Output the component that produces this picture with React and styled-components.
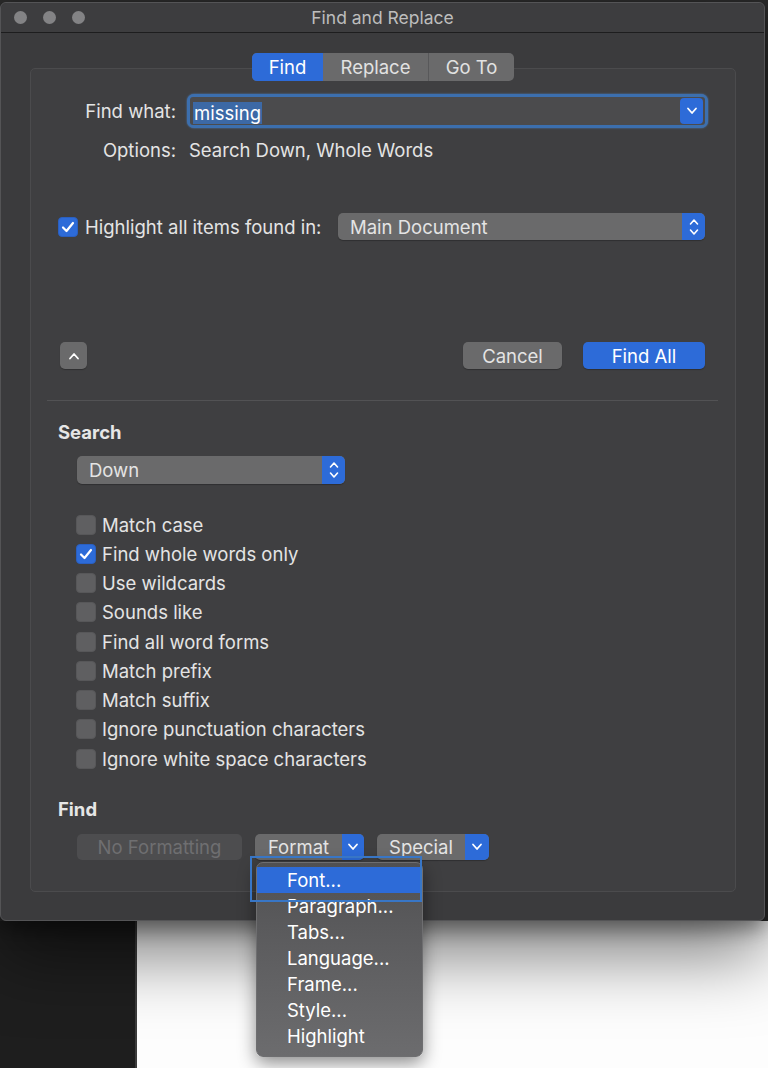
import React from 'react';
import styled, { createGlobalStyle } from 'styled-components';

const GlobalStyle = createGlobalStyle`
  html, body {
    margin: 0;
    padding: 0;
    background: #262626;
  }
  body {
    font-family: Inter, "Noto Sans", "Liberation Sans", sans-serif;
    -webkit-font-smoothing: antialiased;
  }
`;

const BLUE = '#2d6bd8';
const GRAY = '#6a6a6b';
const TEXT = '#e4e4e4';
const FS = '18.5px';

const Screen = styled.div`
  width: 768px;
  height: 1068px;
  overflow: hidden;
  box-sizing: border-box;
  padding-top: 2px;
  display: flex;
  flex-direction: column;
  background: #2b2b2b;
`;

const Window = styled.div`
  position: relative;
  z-index: 2;
  width: 765px;
  height: 919px;
  flex: 0 0 auto;
  box-sizing: border-box;
  display: flex;
  flex-direction: column;
  background: #3b3b3d;
  border: 1px solid #545456;
  border-radius: 6px;
  box-shadow: 0 34px 70px rgba(0, 0, 0, 0.5), 0 8px 20px rgba(0, 0, 0, 0.4);
`;

const TitleBar = styled.div`
  height: 29px;
  flex: 0 0 auto;
  display: grid;
  grid-template-columns: 1fr auto 1fr;
  align-items: center;
  border-bottom: 1px solid #1d1d1e;
  background: #3d3d3f;
  border-radius: 6px 6px 0 0;
`;

const Lights = styled.div`
  display: flex;
  gap: 16px;
  padding-left: 13px;
`;

const Light = styled.span`
  width: 13px;
  height: 13px;
  border-radius: 50%;
  background: #838385;
`;

const Title = styled.div`
  color: #bdbdbd;
  font-size: 17.5px;
`;

const Body = styled.div`
  flex: 1;
  display: flex;
  flex-direction: column;
  padding: 20px 28px 28px 29px;
`;

const Tabs = styled.div`
  position: relative;
  z-index: 1;
  align-self: center;
  display: flex;
  height: 28px;
  border-radius: 5px;
  overflow: hidden;
  background: ${GRAY};
`;

const Tab = styled.div`
  display: flex;
  align-items: center;
  justify-content: center;
  width: ${(p) => p.$w}px;
  font-size: ${FS};
  color: ${(p) => (p.$active ? '#ffffff' : '#e2e2e2')};
  background: ${(p) => (p.$active ? BLUE : 'transparent')};
  border-left: ${(p) => (p.$sep ? '1px solid #58585a' : 'none')};
`;

const GroupBox = styled.div`
  flex: 1;
  margin-top: -13px;
  display: flex;
  flex-direction: column;
  background: #3f3f41;
  border: 1px solid #4b4b4d;
  border-radius: 5px;
`;

const Section = styled.div`
  display: flex;
  flex-direction: column;
  padding: ${(p) => p.$pad};
`;

const Row = styled.div`
  display: flex;
  align-items: center;
  margin-top: ${(p) => p.$mt || 0}px;
  height: ${(p) => p.$h}px;
`;

const FormLabel = styled.div`
  width: 118px;
  margin-right: ${(p) => p.$gap}px;
  text-align: right;
  font-size: ${FS};
  color: ${TEXT};
  white-space: nowrap;
`;

const Text = styled.span`
  font-size: ${FS};
  color: ${TEXT};
  white-space: nowrap;
`;

const FocusField = styled.div`
  width: 521px;
  height: 34px;
  box-sizing: border-box;
  display: flex;
  align-items: center;
  padding: 3px;
  border-radius: 7px;
  background: #3c6fae;
  box-shadow: 0 0 2px #4d82c4;
`;

const FieldInner = styled.div`
  flex: 1;
  height: 100%;
  display: flex;
  align-items: center;
  justify-content: space-between;
  padding: 0 2px 0 3px;
  background: #4b4b4d;
  border-radius: 3px;
`;

const Selected = styled.span`
  display: inline-block;
  margin-top: 4px;
  padding: 0 1px;
  line-height: 22px;
  font-size: ${FS};
  color: #ffffff;
  background: #3c69a6;
`;

const ArrowBox = styled.div`
  width: ${(p) => p.$w || 23}px;
  height: ${(p) => p.$h || 26}px;
  display: flex;
  align-items: center;
  justify-content: center;
  background: ${BLUE};
  border-radius: ${(p) => p.$r || '4px'};
`;

const Check = styled.div`
  width: 20px;
  height: 20px;
  flex: 0 0 auto;
  box-sizing: border-box;
  display: flex;
  align-items: center;
  justify-content: center;
  border-radius: 4px;
  background: ${(p) => (p.$on ? BLUE : '#5f5f61')};
  border: 1px solid ${(p) => (p.$on ? '#2a5fc0' : '#575759')};
  margin-right: ${(p) => p.$gap}px;
`;

const Select = styled.div`
  width: ${(p) => p.$w}px;
  height: ${(p) => p.$h}px;
  margin-left: ${(p) => p.$ml || 0};
  display: flex;
  align-items: center;
  justify-content: space-between;
  box-sizing: border-box;
  padding-left: 12px;
  background: ${GRAY};
  border-radius: 5px;
  overflow: hidden;
  box-shadow: 0 1px 1px rgba(0, 0, 0, 0.25);
`;

const Button = styled.div`
  width: ${(p) => p.$w}px;
  height: 27px;
  display: flex;
  align-items: center;
  justify-content: center;
  font-size: ${FS};
  color: ${(p) => (p.$primary ? '#ffffff' : '#e4e4e4')};
  background: ${(p) => (p.$primary ? BLUE : GRAY)};
  border-radius: 5px;
  box-shadow: 0 1px 1px rgba(0, 0, 0, 0.25);
`;

const Spacer = styled.div`
  flex: 1;
`;

const Divider = styled.div`
  height: 1px;
  margin: 31px 17px 0 16px;
  background: #525254;
`;

const Heading = styled.div`
  font-size: ${FS};
  font-weight: 700;
  line-height: 22px;
  color: #e6e6e6;
  margin-top: ${(p) => p.$mt}px;
`;

const OptionList = styled.div`
  display: flex;
  flex-direction: column;
  margin: 26px 0 0 18px;
`;

const OptionRow = styled.div`
  height: 29.25px;
  display: flex;
  align-items: center;
`;

const ToolRow = styled.div`
  display: flex;
  align-items: center;
  gap: 13px;
  height: 26px;
  margin: 14px 0 0 19px;
`;

const DisabledButton = styled.div`
  width: 165px;
  height: 26px;
  display: flex;
  align-items: center;
  justify-content: center;
  font-size: ${FS};
  color: #6f6f71;
  background: #4d4d4f;
  border-radius: 5px;
`;

const PopButton = styled.div`
  position: relative;
  display: flex;
  height: 26px;
  border-radius: 5px;
  background: ${GRAY};
  box-shadow: 0 1px 1px rgba(0, 0, 0, 0.25);
`;

const PopLabel = styled.div`
  width: ${(p) => p.$w}px;
  display: flex;
  align-items: center;
  justify-content: center;
  font-size: ${FS};
  color: #e4e4e4;
`;

const Menu = styled.div`
  position: absolute;
  left: 1px;
  top: 28px;
  z-index: 5;
  width: 167px;
  height: 195px;
  box-sizing: border-box;
  padding-top: 4px;
  border-radius: 7px;
  border: 1px solid #6e6e70;
  background: linear-gradient(#505052, #5c5c5e 40%, #6c6c6e);
  box-shadow: 0 6px 18px rgba(0, 0, 0, 0.45);
`;

const MenuItem = styled.div`
  height: 26px;
  display: flex;
  align-items: center;
  padding-left: 30px;
  font-size: ${FS};
  color: #ffffff;
  background: ${(p) => (p.$active ? BLUE : 'transparent')};
`;

const FocusRect = styled.div`
  position: absolute;
  left: -5px;
  top: 22px;
  z-index: 6;
  width: 172px;
  height: 46px;
  box-sizing: border-box;
  border: 2px solid #3876c6;
  pointer-events: none;
`;

const Desktop = styled.div`
  flex: 1;
  display: flex;
`;

const DarkSide = styled.div`
  width: 135px;
  background: #1e1e1e;
  border-right: 2px solid #3c3c3c;
`;

const Paper = styled.div`
  flex: 1;
  background: #fdfdfd;
`;

const Chevron = ({ up }) => (
  <svg width="12" height="8" viewBox="0 0 12 8">
    <polyline
      points={up ? '2,6.5 6,2 10,6.5' : '2,1.5 6,6 10,1.5'}
      fill="none"
      stroke="#ffffff"
      strokeWidth="1.8"
      strokeLinecap="round"
      strokeLinejoin="round"
    />
  </svg>
);

const Stepper = () => (
  <svg width="12" height="20" viewBox="0 0 12 20">
    <polyline points="2.5,7 6,3 9.5,7" fill="none" stroke="#fff" strokeWidth="1.6" strokeLinecap="round" strokeLinejoin="round" />
    <polyline points="2.5,13 6,17 9.5,13" fill="none" stroke="#fff" strokeWidth="1.6" strokeLinecap="round" strokeLinejoin="round" />
  </svg>
);

const Tick = () => (
  <svg width="14" height="12" viewBox="0 0 14 12">
    <polyline points="2,6.5 5.5,10 12,2" fill="none" stroke="#fff" strokeWidth="2.2" strokeLinecap="round" strokeLinejoin="round" />
  </svg>
);

const options = [
  ['Match case', false],
  ['Find whole words only', true],
  ['Use wildcards', false],
  ['Sounds like', false],
  ['Find all word forms', false],
  ['Match prefix', false],
  ['Match suffix', false],
  ['Ignore punctuation characters', false],
  ['Ignore white space characters', false],
];

const menuItems = ['Font...', 'Paragraph...', 'Tabs...', 'Language...', 'Frame...', 'Style...', 'Highlight'];

export default function App() {
  return (
    <Screen>
      <GlobalStyle />
      <Window>
        <TitleBar>
          <Lights>
            <Light />
            <Light />
            <Light />
          </Lights>
          <Title>Find and Replace</Title>
          <div />
        </TitleBar>
        <Body>
          <Tabs>
            <Tab $w={71} $active>Find</Tab>
            <Tab $w={105}>Replace</Tab>
            <Tab $w={85} $sep>Go To</Tab>
          </Tabs>
          <GroupBox>
            <Section $pad="25px 27px 0 27px">
              <Row $h={34}>
                <FormLabel $gap={11}>Find what:</FormLabel>
                <FocusField>
                  <FieldInner>
                    <Selected>missing</Selected>
                    <ArrowBox $h={26}>
                      <Chevron />
                    </ArrowBox>
                  </FieldInner>
                </FocusField>
              </Row>
              <Row $h={22} $mt={11}>
                <FormLabel $gap={13}>Options:</FormLabel>
                <Text>Search Down, Whole Words</Text>
              </Row>
              <Row $h={27} $mt={52}>
                <Check $on $gap={7}>
                  <Tick />
                </Check>
                <Text>Highlight all items found in:</Text>
                <Select $w={367} $h={27} $ml="auto">
                  <Text>Main Document</Text>
                  <ArrowBox $h={27} $r="0 5px 5px 0">
                    <Stepper />
                  </ArrowBox>
                </Select>
                <div style={{ width: 3 }} />
              </Row>
              <Row $h={27} $mt={102}>
                <Button $w={27} style={{ marginLeft: 2 }}>
                  <Chevron up />
                </Button>
                <Spacer />
                <Button $w={99}>Cancel</Button>
                <Button $w={122} $primary style={{ marginLeft: 21, marginRight: 3 }}>
                  Find All
                </Button>
              </Row>
            </Section>
            <Divider />
            <Section $pad="0 27px 0 27px">
              <Heading $mt={20}>Search</Heading>
              <Row $h={28} $mt={13}>
                <Select $w={268} $h={28} style={{ marginLeft: 19 }}>
                  <Text>Down</Text>
                  <ArrowBox $h={28} $r="0 5px 5px 0">
                    <Stepper />
                  </ArrowBox>
                </Select>
              </Row>
              <OptionList>
                {options.map(([label, on]) => (
                  <OptionRow key={label}>
                    <Check $on={on} $gap={6}>
                      {on && <Tick />}
                    </Check>
                    <Text>{label}</Text>
                  </OptionRow>
                ))}
              </OptionList>
              <Heading $mt={25}>Find</Heading>
              <ToolRow>
                <DisabledButton>No Formatting</DisabledButton>
                <PopButton>
                  <PopLabel $w={87}>Format</PopLabel>
                  <ArrowBox $w={22} $h={26} $r="0 5px 5px 0">
                    <Chevron />
                  </ArrowBox>
                  <Menu>
                    {menuItems.map((m, i) => (
                      <MenuItem key={m} $active={i === 0}>
                        {m}
                      </MenuItem>
                    ))}
                  </Menu>
                  <FocusRect />
                </PopButton>
                <PopButton>
                  <PopLabel $w={88}>Special</PopLabel>
                  <ArrowBox $w={24} $h={26} $r="0 5px 5px 0">
                    <Chevron />
                  </ArrowBox>
                </PopButton>
              </ToolRow>
            </Section>
          </GroupBox>
        </Body>
      </Window>
      <Desktop>
        <DarkSide />
        <Paper />
      </Desktop>
    </Screen>
  );
}
